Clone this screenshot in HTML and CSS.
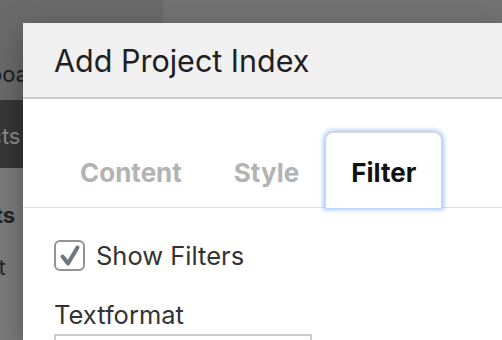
FILE: index.html
```html
<!DOCTYPE html>
<html lang="en">
<head>
    <meta charset="UTF-8">
    <meta name="viewport" content="width=device-width, initial-scale=1.0">
    <title>Add Project Index</title>
    <link rel="stylesheet" href="styles.css">
</head>
<body>
    <div class="page">
        <nav class="sidebar">
            <div class="sidebar-top">
                <div class="nav-item brand">Dashboard</div>
            </div>
            <div class="nav-item active">Projects</div>
            <div class="nav-rest">
                <div class="nav-heading">Tickets</div>
                <div class="nav-item">Layout</div>
            </div>
        </nav>
        <main class="main"></main>
    </div>

    <div class="modal">
        <div class="modal-header">
            <h1 class="modal-title">Add Project Index</h1>
        </div>
        <div class="tabs">
            <button class="tab">Content</button>
            <button class="tab">Style</button>
            <button class="tab active">Filter</button>
        </div>
        <div class="modal-body">
            <label class="check-row">
                <span class="checkbox">
                    <svg viewBox="0 0 27 27" width="27" height="27">
                        <path d="M6.5 14.5 L12 21.5 L21.5 5.5" fill="none" stroke="#6d7680" stroke-width="4" stroke-linecap="round" stroke-linejoin="round"/>
                    </svg>
                </span>
                Show Filters
            </label>
            <div class="field">
                <label class="field-label" for="textformat">Textformat</label>
                <input type="text" id="textformat" class="field-input">
            </div>
        </div>
    </div>
</body>
</html>
```

FILE: styles.css
```css
body {
    margin: 0;
    font-family: Inter, "Liberation Sans", sans-serif;
    background-color: #737373;
    overflow: hidden;
}

.page {
    display: flex;
    height: 340px;
}

.sidebar {
    width: 163px;
    margin-left: -64px;
    padding-left: 64px;
    display: flex;
    flex-direction: column;
    background-color: #6b6b6b;
    font-size: 22px;
}

.sidebar-top {
    height: 100px;
    display: flex;
    align-items: flex-end;
}

.nav-item {
    margin-left: -64px;
    height: 68px;
    line-height: 68px;
}

.brand {
    height: auto;
    line-height: 1;
    padding-bottom: 15px;
    color: #1e1e1e;
}

.nav-item.active {
    background-color: #373737;
    color: #8e8e8e;
    line-height: 72px;
}

.nav-rest {
    flex: 1;
    background-color: #7c7c7c;
    color: #262626;
}

.nav-heading {
    margin-left: -64px;
    font-weight: bold;
    padding-top: 34px;
    height: 30px;
}

.nav-rest .nav-item {
    height: auto;
    line-height: 1;
    padding-top: 24px;
}

.main {
    flex: 1;
    background-color: #737373;
}

.modal {
    position: absolute;
    left: 23px;
    top: 23px;
    width: 479px;
    height: 317px;
    overflow: hidden;
    background-color: white;
    box-shadow: 0 10px 30px rgba(0, 0, 0, 0.35);
}

.modal-header {
    height: 74px;
    background-color: #f0f0f0;
    border-bottom: 2px solid #cbcbcb;
    display: flex;
    align-items: center;
    padding-left: 31px;
}

.modal-title {
    margin: 0;
    font-size: 30.5px;
    font-weight: 400;
    color: #1f2023;
}

.tabs {
    display: flex;
    padding: 33px 0 0 31px;
    border-bottom: 1px solid #dddddd;
}

.tab {
    font-family: inherit;
    font-size: 26px;
    font-weight: 700;
    color: #b3b3b3;
    background: none;
    border: 1px solid transparent;
    border-bottom: none;
    border-radius: 8px 8px 0 0;
    height: 76px;
    padding: 4px 25px 0;
    margin-bottom: -1px;
}

.tab.active {
    color: #111;
    background-color: white;
    border-color: #d6d6d6;
    box-shadow: 0 0 4px 2px rgba(110, 165, 255, 0.6);
}

.modal-body {
    padding: 32px 31px 0;
}

.check-row {
    display: flex;
    align-items: center;
    gap: 11px;
    font-size: 25.5px;
    color: #333;
}

.checkbox {
    width: 27px;
    height: 27px;
    border: 2px solid #939393;
    border-radius: 6px;
    display: flex;
}

.field {
    margin-top: 29px;
}

.field-label {
    display: block;
    font-size: 25.5px;
    line-height: 30px;
    color: #333;
    margin-bottom: 4px;
}

.field-input {
    width: 258px;
    height: 36px;
    border: 2px solid #cccccc;
    box-sizing: border-box;
    margin: 0;
}
```
